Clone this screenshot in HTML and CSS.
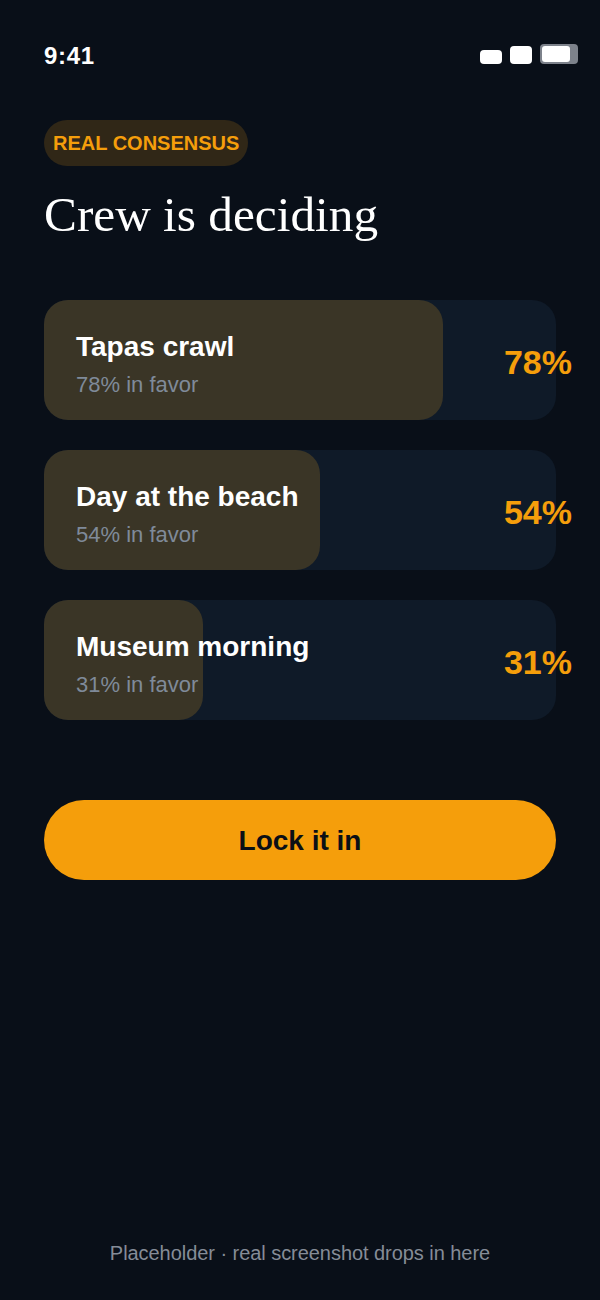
FILE: index.html
```html
<!DOCTYPE html>
<html lang="en">
<head>
<meta charset="utf-8">
<title>Crew is deciding</title>
<link rel="stylesheet" href="styles.css">
</head>
<body>
<div class="screen">
  <div class="status">
    <span class="time">9:41</span>
    <div class="status-icons">
      <span class="sig"></span>
      <span class="wifi"></span>
      <span class="batt"><span class="batt-fill"></span></span>
    </div>
  </div>
  <main class="content">
    <span class="badge">REAL CONSENSUS</span>
    <h1 class="title">Crew is deciding</h1>
    <div class="list">
      <div class="card">
        <div class="fill" style="width:78%"></div>
        <div class="text"><div class="name">Tapas crawl</div><div class="sub">78% in favor</div></div>
        <div class="pct">78%</div>
      </div>
      <div class="card">
        <div class="fill" style="width:54%"></div>
        <div class="text"><div class="name">Day at the beach</div><div class="sub">54% in favor</div></div>
        <div class="pct">54%</div>
      </div>
      <div class="card">
        <div class="fill" style="width:31%"></div>
        <div class="text"><div class="name">Museum morning</div><div class="sub">31% in favor</div></div>
        <div class="pct">31%</div>
      </div>
    </div>
    <button class="cta">Lock it in</button>
  </main>
  <footer class="foot">Placeholder · real screenshot drops in here</footer>
</div>
</body>
</html>
```
FILE: styles.css
```css
* { box-sizing: border-box; }
html, body { margin: 0; padding: 0; }
body { background: #090f18; font-family: "Liberation Sans", Arial, sans-serif; color: #fff; }
.screen { width: 600px; height: 1300px; display: flex; flex-direction: column; overflow: hidden; }
.status { height: 44px; margin-top: 34px; padding: 0 22px 0 44px; display: flex; justify-content: space-between; align-items: center; }
.time { font-size: 24px; font-weight: 700; letter-spacing: 0.7px; }
.status-icons { display: flex; align-items: flex-end; gap: 8px; margin-bottom: 4px; }
.sig { width: 22px; height: 14px; border-radius: 4px; background: #fff; }
.wifi { width: 22px; height: 18px; border-radius: 4px; background: #fff; }
.batt { width: 38px; height: 20px; border-radius: 4px; background: #7d828b; padding: 2px; display: flex; }
.batt-fill { width: 28px; height: 16px; border-radius: 3px; background: #fff; }
.content { padding: 42px 44px 0; display: flex; flex-direction: column; align-items: flex-start; }
.badge { height: 46px; line-height: 46px; padding: 0 9px; border-radius: 23px; background: #302717; color: #f59e0b; font-size: 20px; font-weight: 700; }
.title { margin: 21px 0 0; height: 56px; font-family: "Liberation Serif", serif; font-size: 49.3px; line-height: 56px; font-weight: 400; }
.list { margin-top: 57px; width: 100%; display: flex; flex-direction: column; gap: 30px; }
.card { position: relative; height: 120px; border-radius: 24px; background: #0f1a28; padding: 0 32px; display: flex; align-items: center; justify-content: space-between; }
.fill { position: absolute; left: 0; top: 0; bottom: 0; border-radius: 24px; background: #3a3526; }
.text { position: relative; top: 4px; }
.name { font-size: 28px; font-weight: 700; line-height: 32px; }
.sub { margin-top: 9px; font-size: 22px; line-height: 26px; color: #7f8a99; }
.pct { position: absolute; right: -16px; top: 43px; font-size: 34px; line-height: 38px; font-weight: 700; color: #f59e0b; }
.cta { margin-top: 80px; width: 100%; height: 80px; padding: 2px 0 0; border: 0; border-radius: 40px; background: #f59e0b; color: #0b0f16; font-family: inherit; font-size: 28px; font-weight: 700; }
.foot { margin-top: auto; margin-bottom: 35px; text-align: center; font-size: 20px; line-height: 24px; letter-spacing: -0.05px; color: #858c97; }
```
